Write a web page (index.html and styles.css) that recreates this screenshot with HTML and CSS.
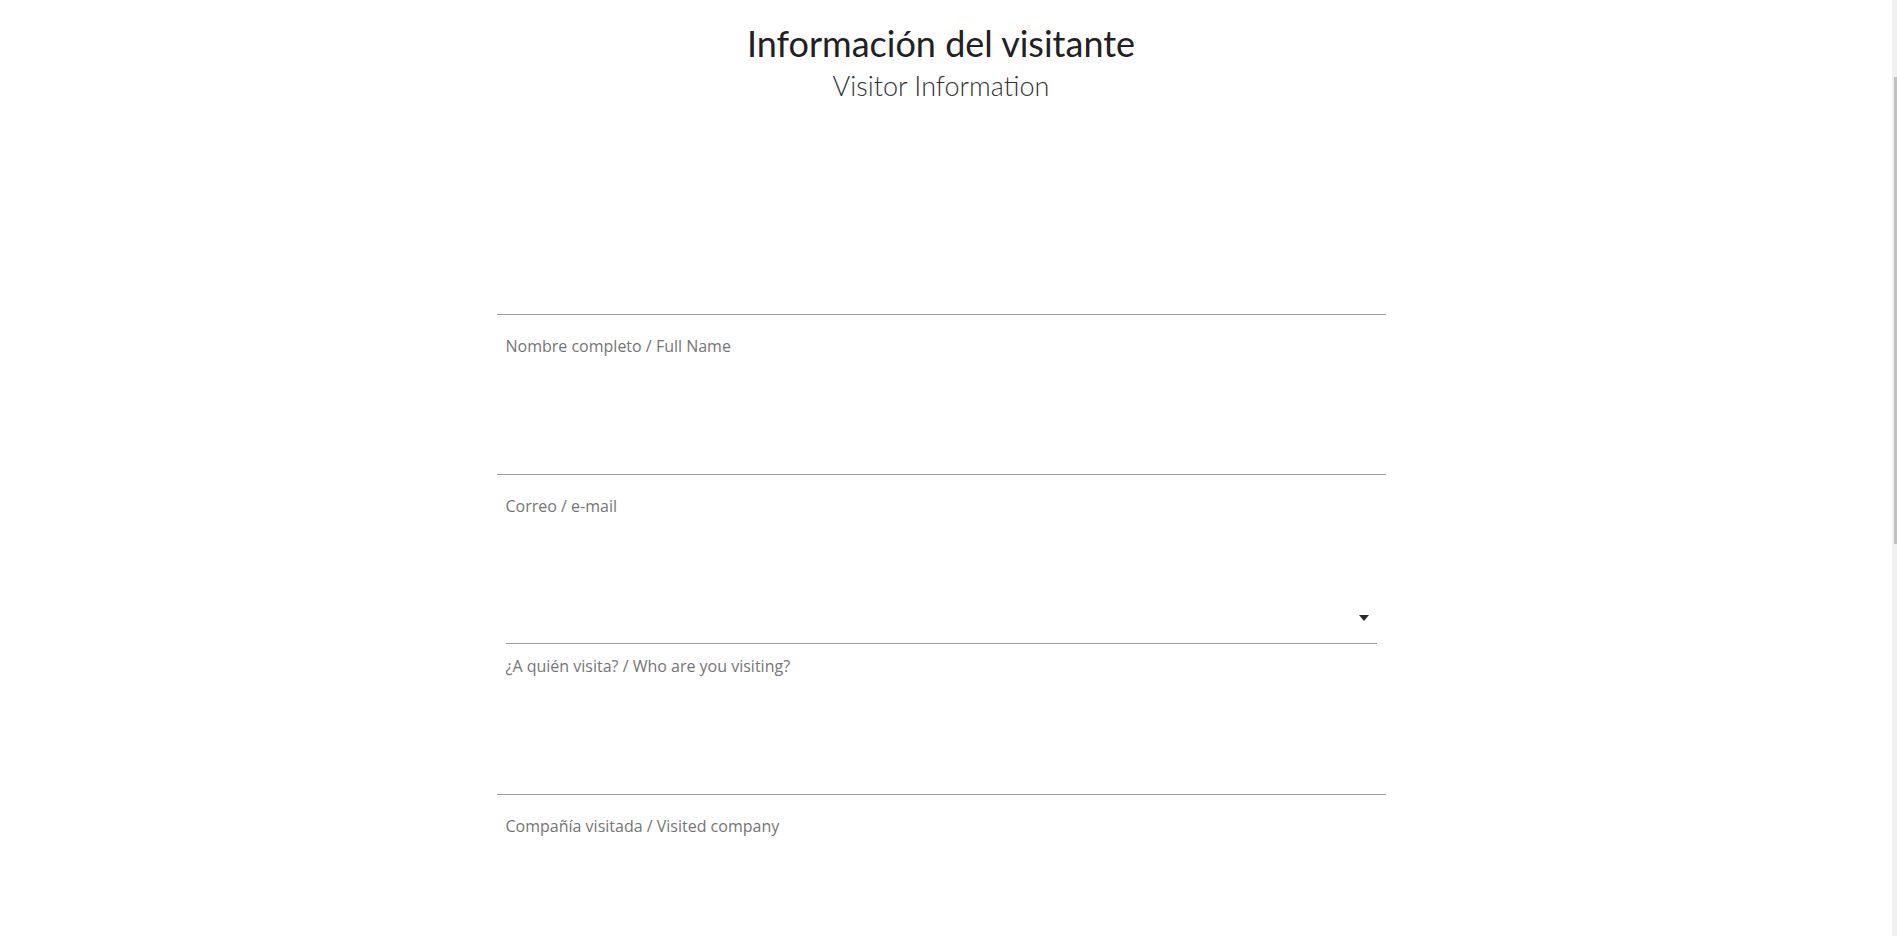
FILE: index.html
```html
<!DOCTYPE html>
<html lang="es">
<head>
<meta charset="utf-8">
<title>Información del visitante</title>
<link rel="stylesheet" href="styles.css">
</head>
<body>
<div class="page">
  <header class="head">
    <h1 class="title">Información del visitante</h1>
    <p class="subtitle">Visitor Information</p>
  </header>
  <form class="form">
    <div class="field field-first">
      <div class="input"></div>
      <label class="hint">Nombre completo / Full Name</label>
    </div>
    <div class="field">
      <div class="input"></div>
      <label class="hint">Correo / e-mail</label>
    </div>
    <div class="field">
      <div class="select"><span class="arrow"></span></div>
      <label class="hint hint-select">¿A quién visita? / Who are you visiting?</label>
    </div>
    <div class="field">
      <div class="input"></div>
      <label class="hint">Compañía visitada / Visited company</label>
    </div>
  </form>
</div>
<div class="scrollbar"><div class="thumb"></div></div>
</body>
</html>
```

FILE: styles.css
```css
html, body {
  margin: 0;
  padding: 0;
  background: #ffffff;
  height: 100%;
  overflow: hidden;
}
body {
  font-family: "Open Sans", "Noto Sans", sans-serif;
}
.page {
  padding-right: 15px;
}
.head {
  text-align: center;
  padding-top: 21px;
}
.title {
  margin: 0;
  font-family: Lato, "Open Sans", sans-serif;
  font-weight: 400;
  font-size: 36px;
  line-height: 44px;
  color: #212121;
}
.subtitle {
  margin: 4px 0 0;
  font-family: Lato, "Open Sans", sans-serif;
  font-weight: 300;
  font-size: 27px;
  line-height: 34px;
  color: #333333;
}
.form {
  width: 889px;
  margin: 0 auto;
  display: flex;
  flex-direction: column;
}
.field {
  display: flex;
  flex-direction: column;
  margin-top: 70px;
}
.field-first {
  margin-top: 163px;
}
.input {
  height: 48px;
  border-bottom: 1px solid #9e9e9e;
}
.select {
  position: relative;
  height: 57px;
  margin: 0 9px;
  border-bottom: 1px solid #9e9e9e;
}
.arrow {
  position: absolute;
  right: 8px;
  bottom: 22px;
  width: 0;
  height: 0;
  border-left: 5.5px solid transparent;
  border-right: 5.5px solid transparent;
  border-top: 6px solid #2b2b2b;
}
.hint {
  margin-top: 21px;
  padding-left: 9px;
  font-size: 16px;
  line-height: 20px;
  color: #757575;
}
.hint-select {
  margin-top: 12px;
}
.scrollbar {
  position: fixed;
  top: 0;
  right: 0;
  width: 5px;
  height: 100%;
  background: #f0f0f0;
}
.thumb {
  position: absolute;
  top: 77px;
  left: 2px;
  width: 3px;
  height: 467px;
  background: #c1c1c1;
}
```
